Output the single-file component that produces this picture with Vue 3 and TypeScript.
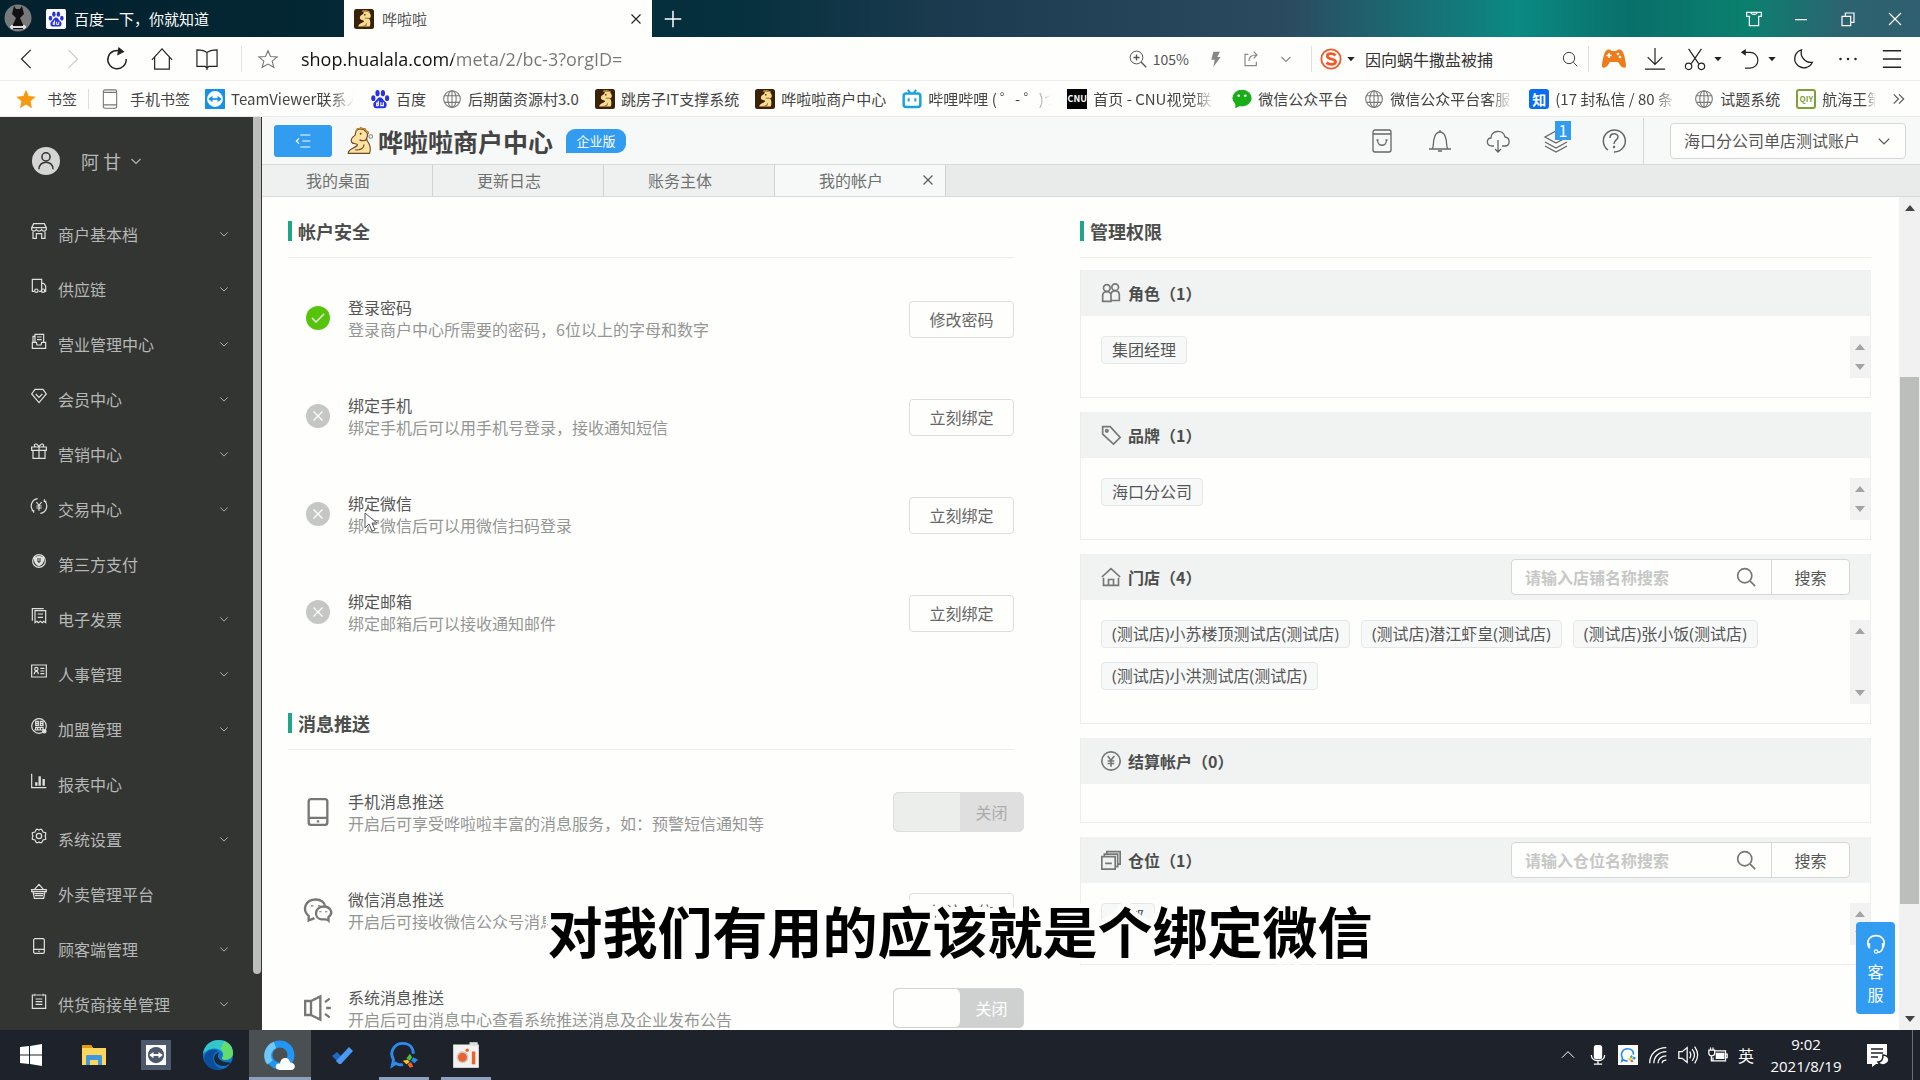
<script setup lang="ts">
import { ref } from 'vue'

interface Bookmark { icon: string; label: string; cut?: boolean }
interface MenuItem { icon: string; label: string; open: boolean }
interface Setting { icon: string; title: string; desc: string; action?: string; disabled?: boolean }
interface Panel { icon: string; title: string; count: number; tags: string[]; search?: string; tall?: boolean; empty?: boolean }

const dino = '<rect width="24" height="24" rx="3" fill="#3a2208" stroke="none"/><path d="M5 21c1-4 5-4 7-6 1-2-4-1-5-4 0-3 2-4 4-5l1-3 3 0 3 1 2 3 0 3-2 1c2 3 2 6 1 10z" fill="#f8dc93" stroke="none"/><circle cx="13" cy="7" r="1" fill="#3a2208" stroke="none"/><path d="M9 21c4 0 6-1 6-4M18 11h-5" stroke="#a4702a"/><path d="m10 3 1-1 1 1 1-1 2 0 2 1 2 1" stroke="#e0a040"/>'
const paw = '<g fill="#2932e1" stroke="none"><ellipse cx="4" cy="11" rx="2.500" ry="3.500"/><ellipse cx="9" cy="5" rx="2.500" ry="3.700"/><ellipse cx="15.500" cy="5" rx="2.500" ry="3.700"/><ellipse cx="20.500" cy="11" rx="2.500" ry="3.500"/><path d="M12 10c3 0 4 4 7 6 2 2 1 7-2 7H7c-3 0-4-5-2-7 3-2 4-6 7-6z"/></g><path d="M10 14v6M10 17h-2v3h2M13 16v4h3v-4" stroke="#fff" stroke-width="1.400" fill="none"/>'
const wecom = '<path d="M11 20c-2 1-5 0-6-1l-3 2 1-5C-1 9 4 2 11 2c6 0 9 4 9 9" stroke="#2b8cf0" stroke-width="2.500" fill="none"/><g stroke="none"><path d="m17 11 2 3-2 3-3-2z" fill="#48c03a"/><path d="m20 14 4 2-3 3-3-2z" fill="#2b8cf0"/><path d="m18 18 2 4-3 1-2-3z" fill="#f3602c"/><path d="m11 17 4-1 2 2-3 2z" fill="#fbc02d"/></g>'

const icons: Record<string, string> = {
  baidu: '<rect width="24" height="24" rx="2" fill="#fff" stroke="none"/><g transform="translate(2 2) scale(.83)">' + paw + '</g>',
  paw, dino, wecom,
  back: '<path d="m16 2-10 10 10 10"/>',
  forward: '<path d="m8 2 10 10-10 10"/>',
  reload: '<path d="M17 4A10 10 0 1 0 22 12" stroke-width="1.600"/><path d="m14 0 5 4-6 3z" fill="currentColor"/>',
  home: '<path d="M1 13 12 1l11 12M4 10v13h16V10"/>',
  book: '<path d="M12 4v20M12 5c-2-2-5-3-11-3v18h9l2 2 2-2h9V2c-6 0-9 1-11 3z"/>',
  starLine: '<path d="m12 2 3 7 8 .6-6 5 2 7.400-7-4-7 4 2-7.400-6-5L9 9z"/>',
  star: '<path d="m12 1 3.300 7.500 8.200.8-6 5.500 1.700 8.200-7.200-4.300L4.800 23l1.700-8.200-6-5.500 8.200-.8z" fill="#f7980f" stroke="none"/>',
  zoomIn: '<circle cx="10" cy="10" r="8.500"/><path d="M10 6v8M6 10h8M16 16l7 7" stroke-width="1.800"/>',
  bolt: '<path d="M8 1h10l-4 8h5L8 24l2-11H5z" fill="#858885" stroke="none"/>',
  share: '<path d="M8 5H3v17h17v-6M9 15c0-6 3-9 11-9M16 1l5 5-5 5" stroke-width="1.800"/>',
  chev: '<path d="m3 8 9 9 9-9"/>',
  sogou: '<circle cx="12" cy="12" r="10.500" stroke="#ef5a28" stroke-width="2"/><path d="M17 8c-3-2.500-9-2.500-9 1 0 4 9 2 9 6 0 3.500-7 3.500-10 1" stroke="#ef5a28" stroke-width="3"/>',
  caret: '<path d="M1 6h22L12 19z" fill="currentColor" stroke="none"/>',
  search: '<circle cx="10.500" cy="10.500" r="8.500"/><path d="m17 17 6 6"/>',
  pad: '<path d="M5 3c2-1 4 0 5 1h4c1-1 3-2 5-1 3 1 5 12 5 16 0 3-4 2-6-1l-2-3H8l-2 3c-2 3-6 4-6 1C0 15 2 4 5 3z" fill="#ee7c1c" stroke="none"/><path d="M7 6v5M4.500 8.500h5" stroke="#fff" stroke-width="1.600"/><circle cx="16" cy="7" r="1.300" fill="#fff" stroke="none"/><circle cx="18" cy="10" r="1.300" fill="#fff" stroke="none"/>',
  download: '<path d="M12 0v18M4 10l8 8 8-8M1 23h22"/>',
  cut: '<path d="m5 1 11 16M19 1 8 17"/><circle cx="5" cy="20" r="3.500"/><circle cx="19" cy="20" r="3.500"/>',
  undo: '<path d="M3 4h9a9 9 0 0 1 0 19H6" stroke-width="1.400"/><path d="M7 0v8L1 4z" fill="currentColor" stroke="none"/>',
  moon: '<path d="M9 1a11 11 0 1 0 13 15A12 12 0 0 1 9 1z" stroke-width="1.600"/>',
  dots: '<g fill="currentColor" stroke="none"><circle cx="3" cy="12" r="1.500"/><circle cx="12" cy="12" r="1.500"/><circle cx="21" cy="12" r="1.500"/></g>',
  menu: '<path d="M1 2h22M1 12h22M1 22h22" stroke-width="1.800"/>',
  shirt: '<path d="M1 2h6c1 4 9 4 10 0h6v6h-4v14H5V8H1zM7 2h10"/>',
  min: '<path d="M3 13h18"/>',
  restore: '<path d="M3 8h13v14H3zM8 8V3h13v14h-5"/>',
  close: '<path d="m3 3 18 18M21 3 3 21"/>',
  plus: '<path d="M12 1v22M1 12h22"/>',
  more: '<path d="m3 4 8 8-8 8M12 4l8 8-8 8" stroke-width="2"/>',
  phoneLine: '<rect x="4" y="1" width="16" height="22" rx="2"/><path d="M4 19h16M4 4h16" />',
  tv: '<rect width="24" height="24" rx="1" fill="#1592e6" stroke="none"/><circle cx="12" cy="12" r="9.500" fill="#fff" stroke="none"/><path d="M6 12h12" stroke="#1592e6" stroke-width="2"/><path d="M9 8v8l-5-4zM15 8v8l5-4z" fill="#1592e6" stroke="none"/>',
  globe: '<circle cx="12" cy="12" r="10"/><ellipse cx="12" cy="12" rx="5" ry="10"/><path d="M12 2v20M3 8h18M3 16h18"/>',
  bili: '<path d="m7 1 3 4M17 1l-3 4" stroke="#19a3d9" stroke-width="2.400"/><rect x="2" y="5.500" width="20" height="16" rx="3" stroke="#19a3d9" stroke-width="3"/><path d="M8 11v4M16 11v4" stroke="#19a3d9" stroke-width="2.400"/>',
  wechatFill: '<ellipse cx="12" cy="11" rx="11.500" ry="10" fill="#1aad19" stroke="none"/><path d="m4 16 0 7 6-3z" fill="#1aad19" stroke="none"/><circle cx="8" cy="8" r="1.500" fill="#fff" stroke="none"/><circle cx="16" cy="8" r="1.500" fill="#fff" stroke="none"/>',
  fold: '<path d="M8 3h15M11 12h12M8 21h15M6 8l-4 4 4 4" stroke-width="1.700"/>',
  bag: '<rect x="3" y="1" width="18" height="22" rx="2"/><path d="M3 5h18M7.500 11c0 7 9 7 9 0M6.500 11h2M15.500 11h2"/>',
  bell: '<path d="M4 20c2-2 1-6 2-10 1-5 3-7 6-7s5 2 6 7c1 4 0 8 2 10zM1 20h22M10 22h4M12 1v2" />',
  cloud: '<path d="M8 17H6C0 17 0 9 5 9c0-8 12-9 14-1 6 1 5 9 0 9h-3M12 11v12M9 20l3 3 3-3"/>',
  layers: '<path d="m12 2 11 6-11 6L1 8zM1 13l11 6 11-6M1 17l11 6 11-6"/>',
  help: '<path d="M6 21A11 11 0 1 1 12 23M8 9c0-6 8-5 8-1 0 3-4 3-4 7" stroke-width="1.500"/><circle cx="12" cy="18" r="1.200" fill="currentColor" stroke="none"/>',
  user: '<circle cx="12" cy="12" r="12" fill="#d4d5d4" stroke="none"/><circle cx="12" cy="8.500" r="3.500" stroke="#333532"/><path d="M6 19c0-8 12-8 12 0" stroke="#333532"/>',
  shop: '<path d="M4 1h16l3 6v3c-2 3-5 3-7 0-2 3-6 3-8 0-2 3-5 3-7 0V7zM1 7h22M3 13v10h5v-7h8v7h5V13"/>',
  truck: '<path d="M5 20H2V2h14v18h-4M16 8h3l3 4v8h-1"/><circle cx="8" cy="19" r="2.500"/><circle cx="18" cy="19" r="2.500"/>',
  desk: '<path d="M6 14V2h13v12M9 6h7M9 10h7M2 14h6l1 4h6l1-4h6v9H2zM6 5H3v9"/>',
  gem: '<path d="M6 2h12l5 7-11 13L1 9zM7 9l5 5 5-5"/>',
  gift: '<path d="M1 6h22v5H1zM3 11v12h18V11M12 6v17M12 6C8-3 2 4 7 6M12 6c4-9 10-2 5 0"/>',
  trade: '<path d="M10 1A11 11 0 0 0 3 19M1 19h3v3M14 23A11 11 0 0 0 21 5M23 5h-3V2M8 6l4 5 4-5M12 11v8M8 12h8M8 15h8"/>',
  shield: '<circle cx="12" cy="12" r="9.500"/><path d="m12 5 7 2c0 6-2 10-7 12-5-2-7-6-7-12z" fill="currentColor"/><path d="M9 9h6M9 12h6M12 12v3" stroke="#333532"/>',
  bill: '<path d="M6 4h16v18l-3-2-2 2-3-2-3 2-2-2-3 2zM2 19V1h17M10 9h8M10 14h8"/>',
  card: '<path d="M1 3h22v18H1zM14 8h6M14 12h6M14 16h6M5 17c0-6 6-6 6 0"/><circle cx="8" cy="9" r="2.500"/>',
  ally: '<circle cx="12" cy="12" r="11"/><path d="M7 5h4v6H7zM14 5h4v6h-4zM7 8h4M14 8h4M7 14h11v4H7zM10 14v4M14 14v4M5 18h15"/><circle cx="20" cy="20" r="2.500" fill="currentColor"/>',
  chart: '<path d="M1 1v21h22" /><path d="M8 19v-5M13 19V5M19 19V9" stroke-width="3.500"/>',
  gear: '<path d="M8 2h2l2 1 2-1h2l2 4 4 1v4l-1 1 1 2v3l-4 1-2 4h-3l-1-1-2 1H8l-2-4-4-1v-3l1-2-1-2V7l4-1z"/><circle cx="12" cy="12" r="4"/>',
  basket: '<path d="m5 10 7-8 7 8M1 10h22v3H1zM3 13l2 10h14l2-10M5 16h14M6 19h12" />',
  phone: '<rect x="4" y="1" width="16" height="22" rx="2"/><path d="M4 17h16M11 20h2"/>',
  note: '<path d="M5 3H2v20h20V3h-3M8 3h8M6 1v4M18 1v4M7 9h10M7 13h10M7 17h10"/>',
  okDot: '<circle cx="12" cy="12" r="12" fill="#55c40a" stroke="none"/><path d="m6 12 4 4 8-8" stroke="#fff"/>',
  noDot: '<circle cx="12" cy="12" r="12" fill="#c5c7c5" stroke="none"/><path d="m7.500 7.500 9 9m0-9-9 9" stroke="#fff"/>',
  wechat: '<path d="M9 19c-2 1-3 1-5 2v-4C-2 12 1 3 10 3c5 0 8 3 8 6M18 20c1 0 2 0 3 1v-3c5-4 1-9-4-9-8 0-9 10-2 11z"/><path d="M7 8v1M13 8v1M14 13v1M19 13v1"/>',
  horn: '<path d="M1 6h5v12H1zM6 6l8-4v20l-8-4M18 7l4-3M19 12h4M18 17l4 3"/>',
  roles: '<circle cx="7" cy="6" r="4"/><circle cx="17" cy="5" r="4"/><path d="M2 22v-7c0-6 10-6 10 0v7zM12 13c1-5 10-5 10 1v7H12"/>',
  tag: '<path d="M2 2h9l12 13-8 8L2 11z"/><circle cx="7" cy="7" r="1.500"/>',
  house: '<path d="m1 12 11-10 11 10M3 13v9h18v-9M9 22v-7h6v7"/>',
  yen: '<circle cx="12" cy="12" r="11"/><path d="m8 6 4 5 4-5M12 11v8M8 12h8M8 15h8"/>',
  stack: '<path d="M1 8h16v15H1zM4 8V5h16v15h-3M7 5V2h16v15h-3M5 16h8"/>',
  headset: '<path d="M4 17C-1 8 5 2 12 2s13 6 8 15M4 11v6M20 11v6c-1 4-3 5-6 5" stroke-width="2"/><circle cx="12" cy="21" r="2"/>',
  win: '<path d="M1 4l9-1v8.500H1zM11 3l12-2v10.500H11zM1 12.500h9V21l-9-1zM11 12.500h12V23l-12-2z" fill="#fff" stroke="none"/>',
  folder: '<path d="M0 2h9l2 3h13v17H0z" fill="#ffd65c" stroke="none"/><path d="M0 2h9l2 3H0z" fill="#e09a10" stroke="none"/><path d="M4 22v-8c0-2 1-2 2-2h12c1 0 2 0 2 2v8h-4v-5H8v5z" fill="#3f97dd" stroke="none"/>',
  tvTask: '<rect width="24" height="24" fill="#4c5a6b" stroke="none"/><rect x="4" y="4" width="16" height="16" fill="#fff" stroke="none"/><circle cx="12" cy="12" r="6.500" fill="#4c5a6b" stroke="none"/><path d="M8 12h8" stroke="#fff" stroke-width="1.500"/><path d="M10 9.500v5L6.500 12zM14 9.500v5l3.500-2.500z" fill="#fff" stroke="none"/>',
  edge: '<circle cx="12" cy="12" r="12" fill="#1173cc" stroke="none"/><path d="M0 11C2-4 24-3 24 10c0 5-5 7-9 5 5-6-7-13-15-4z" fill="#35c6c8" stroke="none"/><path d="M17 1c5 2 7 6 7 10-1 5-6 6-9 4 2-4 1-7-1-8z" fill="#62dd6c" stroke="none"/><path d="M12 9c-6 1-5 13 4 14-9 3-15-3-15-9 1-5 6-8 11-5z" fill="#0b4f9c" stroke="none"/><path d="M13 10c-3 3 0 8 8 8l1 0c-3 5-14 3-13-4 0-2 2-4 4-4z" fill="#1b2733" stroke="none"/>',
  qq: '<circle cx="12" cy="12" r="8.800" stroke="#2196f3" stroke-width="5.500"/><path d="M4 18A9 9 0 0 1 8 4" stroke="#6fc8fa" stroke-width="5.500"/><path d="M12 24c-5 0-4-6 0-5 1-7 8-5 8-1 5 0 5 6 1 6z" fill="#fff" stroke="none"/>',
  todo: '<path d="m2 13 5-4 4 4-1 8z" fill="#2564c0" stroke="none"/><path d="m9 21-3-3L19 4l4 4L11 21z" fill="#4a9af5" stroke="none"/>',
  cam: '<rect x="1" y="3" width="22" height="20" fill="#f3f2f0" stroke="none"/><path d="M15 1h7v3h-7z" fill="#ddd" stroke="none"/><circle cx="9" cy="14" r="4.500" fill="#e8642c" stroke="#ccc"/><circle cx="13" cy="8" r="1.500" fill="#e8642c" stroke="none"/><path d="M17 9h3v11h-3z" fill="#e8642c" stroke="none"/>',
  up: '<path d="m3 16 9-9 9 9"/>',
  mic: '<rect x="7" y="0" width="10" height="17" rx="3" fill="#fff" stroke="none"/><path d="M4 12c0 9 16 9 16 0M12 19v4M7 23h10"/>',
  wecomTray: '<rect width="24" height="24" fill="#fff" stroke="none"/><g transform="translate(3 3) scale(.78)">' + wecom + '</g>',
  wifi: '<path d="M2 22C2 11 10 3 22 3M7 22c0-8 6-14 15-14M12 22c0-5 4-9 10-9M17 22c0-3 2-4 5-4"/>',
  sound: '<path d="M1 8h4l6-5v18l-6-5H1zM14 8c2 3 2 5 0 8M17 5c4 5 4 9 0 14M20 2c5 7 5 13 0 20"/>',
  battery: '<path d="M8 7h13v12H6v-4M21 11h2v4h-2M1 6h7v4c0 4-7 4-7 0zM3 6V3M6 6V3M4 13v6h2"/><path d="M10 10h9v6h-9z" fill="#fff"/>',
  notice: '<path d="M1 1h20v13l-4 7h-7l-4 3v-3H1z" fill="#fff" stroke="none"/><path d="M5 6h12M5 10h12M5 14h7" stroke="#1e232b" stroke-width="1.600"/><path d="M17 12c0 7-4 7-5 7 3 5 10 3 11-2 0-3-3-5-6-5z" fill="#fff" stroke="#1e232b"/>',
  logo: '<path d="M2 23c0-4 5-4 8-7 1-2-4-1-5-3s0-4 3-6l1-4 3-2 4 1 3 3 0 3-1 2 1 2c3 4 3 8 2 11z" fill="#ffe2a0" stroke="#6a4a22"/><path d="m9 3 1-2 2 0 1-1 2 1 2 0 1 2 2 1 0 2" stroke="#c08030"/><path d="M8 20c5 0 8-1 8-5M19 10c-2 2-5 2-7 1" stroke="#6a4a22"/><circle cx="13" cy="5.500" r=".8" fill="#333" stroke="none"/><circle cx="22" cy="8" r="1.600" fill="#fff" stroke="#888"/>',
}

const navTools = ['back', 'forward', 'reload', 'home', 'book']
const bookmarks: Bookmark[] = [
  { icon: 'tv', label: 'TeamViewer联系人', cut: true },
  { icon: 'paw', label: '百度' },
  { icon: 'globe', label: '后期菌资源村3.0' },
  { icon: 'dino', label: '跳房子IT支撑系统' },
  { icon: 'dino', label: '哗啦啦商户中心' },
  { icon: 'bili', label: '哔哩哔哩 ( ゜- ゜)つ', cut: true },
  { icon: 'cnu', label: '首页 - CNU视觉联', cut: true },
  { icon: 'wechatFill', label: '微信公众平台' },
  { icon: 'globe', label: '微信公众平台客服', cut: true },
  { icon: 'zhi', label: '(17 封私信 / 80 条', cut: true },
  { icon: 'globe', label: '试题系统' },
  { icon: 'iqy', label: '航海王第', cut: true },
]
const letterIcons: Record<string, string> = { cnu: 'CNU', zhi: '知', iqy: 'QIY' }

const menu: MenuItem[] = [
  { icon: 'shop', label: '商户基本档', open: true },
  { icon: 'truck', label: '供应链', open: true },
  { icon: 'desk', label: '营业管理中心', open: true },
  { icon: 'gem', label: '会员中心', open: true },
  { icon: 'gift', label: '营销中心', open: true },
  { icon: 'trade', label: '交易中心', open: true },
  { icon: 'shield', label: '第三方支付', open: false },
  { icon: 'bill', label: '电子发票', open: true },
  { icon: 'card', label: '人事管理', open: true },
  { icon: 'ally', label: '加盟管理', open: true },
  { icon: 'chart', label: '报表中心', open: false },
  { icon: 'gear', label: '系统设置', open: true },
  { icon: 'basket', label: '外卖管理平台', open: false },
  { icon: 'phone', label: '顾客端管理', open: true },
  { icon: 'note', label: '供货商接单管理', open: true },
]
const pageTabs = ['我的桌面', '更新日志', '账务主体', '我的帐户']
const activeTab = ref('我的帐户')

const security: Setting[] = [
  { icon: 'okDot', title: '登录密码', desc: '登录商户中心所需要的密码，6位以上的字母和数字', action: '修改密码' },
  { icon: 'noDot', title: '绑定手机', desc: '绑定手机后可以用手机号登录，接收通知短信', action: '立刻绑定' },
  { icon: 'noDot', title: '绑定微信', desc: '绑定微信后可以用微信扫码登录', action: '立刻绑定' },
  { icon: 'noDot', title: '绑定邮箱', desc: '绑定邮箱后可以接收通知邮件', action: '立刻绑定' },
]
const pushes: Setting[] = [
  { icon: 'phone', title: '手机消息推送', desc: '开启后可享受哗啦啦丰富的消息服务，如：预警短信通知等', disabled: true },
  { icon: 'wechat', title: '微信消息推送', desc: '开启后可接收微信公众号消息', action: '关注微信' },
  { icon: 'horn', title: '系统消息推送', desc: '开启后可由消息中心查看系统推送消息及企业发布公告' },
]
const panels: Panel[] = [
  { icon: 'roles', title: '角色', count: 1, tags: ['集团经理'] },
  { icon: 'tag', title: '品牌', count: 1, tags: ['海口分公司'] },
  { icon: 'house', title: '门店', count: 4, tall: true, search: '请输入店铺名称搜索', tags: ['(测试店)小苏楼顶测试店(测试店)', '(测试店)潜江虾皇(测试店)', '(测试店)张小饭(测试店)', '(测试店)小洪测试店(测试店)'] },
  { icon: 'yen', title: '结算帐户', count: 0, tags: [], empty: true },
  { icon: 'stack', title: '仓位', count: 1, search: '请输入仓位名称搜索', tags: ['全部'] },
]
const tasks = [
  { icon: 'win', state: '' }, { icon: 'folder', state: '' }, { icon: 'tvTask', state: 'wide' }, { icon: 'edge', state: 'wide' },
  { icon: 'qq', state: 'wide current' }, { icon: 'todo', state: '' }, { icon: 'wecom', state: 'running' }, { icon: 'cam', state: 'running' },
]
const tray = ['up', 'mic', 'wecomTray', 'wifi', 'sound', 'battery']
const url = ref('shop.hualala.com/meta/2/bc-3?orgID=')
const query = ref('因向蜗牛撒盐被捕')
</script>

<template>
  <div class="desktop">
    <header class="tabstrip">
      <svg class="avatar" viewBox="0 0 28 28"><circle cx="14" cy="14" r="13.500" fill="#77797b" /><path d="M10 2l2 3h4l2-3 2 8-4 4 5 11H7l5-11-4-4z" fill="#111" /><path d="M6 23h16M8 21v4M20 21v4" stroke="#ddd" stroke-width="2" /></svg>
      <button class="win-tab first"><svg class="ico s20" viewBox="0 0 24 24" v-html="icons.baidu" />百度一下，你就知道</button>
      <button class="win-tab active"><svg class="ico s20" viewBox="0 0 24 24" v-html="icons.dino" /><span>哗啦啦</span><svg class="ico s12 end" viewBox="0 0 24 24" v-html="icons.close" /></button>
      <button class="bare plus" aria-label="新建标签页"><svg class="ico s18" viewBox="0 0 24 24" v-html="icons.plus" /></button>
      <div class="win-ctl">
        <button v-for="n in ['shirt', 'min', 'restore', 'close']" :key="n" class="bare" :aria-label="n"><svg class="ico s16" viewBox="0 0 24 24" v-html="icons[n]" /></button>
      </div>
    </header>

    <div class="toolbar">
      <button v-for="n in navTools" :key="n" class="bare tool" :class="n" :aria-label="n"><svg class="ico s22" viewBox="0 0 24 24" v-html="icons[n]" /></button>
      <i class="vline"></i>
      <svg class="ico s20 fav" viewBox="0 0 24 24" v-html="icons.starLine" />
      <input v-model="url" class="url" aria-label="地址" />
      <button class="bare zoomlv"><svg class="ico s18" viewBox="0 0 24 24" v-html="icons.zoomIn" />105%</button>
      <button v-for="n in ['bolt', 'share', 'chev']" :key="n" class="bare mini" :aria-label="n"><svg class="ico" :class="n === 'chev' ? 's12' : 's16'" viewBox="0 0 24 24" v-html="icons[n]" /></button>
      <div class="websearch">
        <svg class="ico s22" viewBox="0 0 24 24" v-html="icons.sogou" /><svg class="ico s8" viewBox="0 0 24 24" v-html="icons.caret" />
        <input v-model="query" aria-label="网页搜索" />
        <svg class="ico s16" viewBox="0 0 24 24" v-html="icons.search" />
      </div>
      <div class="extras">
        <button class="bare" aria-label="游戏"><svg class="ico s24" viewBox="0 0 24 24" v-html="icons.pad" /></button>
        <button class="bare" aria-label="下载"><svg class="ico s22" viewBox="0 0 24 24" v-html="icons.download" /></button>
        <button class="bare" aria-label="截图"><svg class="ico s22" viewBox="0 0 24 24" v-html="icons.cut" /><svg class="ico s8" viewBox="0 0 24 24" v-html="icons.caret" /></button>
        <button class="bare" aria-label="恢复"><svg class="ico s20" viewBox="0 0 24 24" v-html="icons.undo" /><svg class="ico s8" viewBox="0 0 24 24" v-html="icons.caret" /></button>
        <div class="end-tools">
          <button class="bare" aria-label="夜间"><svg class="ico s20" viewBox="0 0 24 24" v-html="icons.moon" /></button>
          <button class="bare" aria-label="更多"><svg class="ico s20" viewBox="0 0 24 24" v-html="icons.dots" /></button>
          <button class="bare" aria-label="菜单"><svg class="ico s20" viewBox="0 0 24 24" v-html="icons.menu" /></button>
        </div>
      </div>
    </div>

    <nav class="bookmarks">
      <a href="#" class="bm-root"><svg class="ico s20" viewBox="0 0 24 24" v-html="icons.star" />书签</a>
      <a href="#" class="bm-phone"><svg class="ico s20" viewBox="0 0 24 24" v-html="icons.phoneLine" />手机书签</a>
      <a v-for="(b, i) in bookmarks" :key="i" href="#" class="bm">
        <span v-if="letterIcons[b.icon]" class="letters" :class="b.icon">{{ letterIcons[b.icon] }}</span>
        <svg v-else class="ico s20" :class="{ line: b.icon === 'globe' }" viewBox="0 0 24 24" v-html="icons[b.icon]" />
        <span class="lbl" :class="{ cut: b.cut, short: b.icon === 'iqy' }">{{ b.label }}</span>
      </a>
      <svg class="ico s14 bm-more" viewBox="0 0 24 24" v-html="icons.more" />
    </nav>

    <div class="workspace">
      <aside class="side">
        <div class="side-in">
          <button class="bare who"><svg class="ico s28" viewBox="0 0 24 24" v-html="icons.user" /><span>阿 甘</span><svg class="ico s12" viewBox="0 0 24 24" v-html="icons.chev" /></button>
          <a v-for="m in menu" :key="m.label" href="#" class="item">
            <svg class="ico s16" viewBox="0 0 24 24" v-html="icons[m.icon]" /><span>{{ m.label }}</span>
            <svg v-if="m.open" class="ico s10 arrow" viewBox="0 0 24 24" v-html="icons.chev" />
          </a>
        </div>
        <i class="side-bar"></i>
      </aside>

      <section class="app">
        <header class="app-head">
          <button class="fold" aria-label="收起菜单"><svg class="ico s16" viewBox="0 0 24 24" v-html="icons.fold" /></button>
          <svg class="ico logo" viewBox="0 0 24 24" v-html="icons.logo" />
          <h1>哗啦啦商户中心</h1>
          <span class="edition">企业版</span>
          <div class="head-icons">
            <button class="bare" aria-label="商城"><svg class="ico s24" viewBox="0 0 24 24" v-html="icons.bag" /></button>
            <button class="bare" aria-label="通知"><svg class="ico s24" viewBox="0 0 24 24" v-html="icons.bell" /></button>
            <button class="bare" aria-label="下载"><svg class="ico s24" viewBox="0 0 24 24" v-html="icons.cloud" /></button>
            <button class="bare has-badge" aria-label="任务"><svg class="ico s24" viewBox="0 0 24 24" v-html="icons.layers" /><b>1</b></button>
            <button class="bare" aria-label="帮助"><svg class="ico s24" viewBox="0 0 24 24" v-html="icons.help" /></button>
          </div>
          <div class="account">
            <select aria-label="账户"><option>海口分公司单店测试账户</option></select>
            <svg class="ico s14" viewBox="0 0 24 24" v-html="icons.chev" />
          </div>
        </header>
        <nav class="page-tabs">
          <button v-for="t in pageTabs" :key="t" :class="{ on: t === activeTab }" @click="activeTab = t"><span>{{ t }}</span><svg v-if="t === activeTab" class="ico s12" viewBox="0 0 24 24" v-html="icons.close" /></button>
        </nav>

        <div class="view">
          <main class="cols">
            <div>
              <h2>帐户安全</h2>
              <div class="rows">
                <div v-for="s in security" :key="s.title" class="row">
                  <span class="lead"><svg class="ico s24" viewBox="0 0 24 24" v-html="icons[s.icon]" /></span>
                  <div class="txt"><strong>{{ s.title }}</strong><p>{{ s.desc }}</p></div>
                  <button class="act">{{ s.action }}</button>
                </div>
              </div>
              <h2 class="second">消息推送</h2>
              <div class="rows">
                <div v-for="s in pushes" :key="s.title" class="row">
                  <span class="lead"><svg class="ico s28 bold" viewBox="0 0 24 24" v-html="icons[s.icon]" /></span>
                  <div class="txt"><strong>{{ s.title }}</strong><p>{{ s.desc }}</p></div>
                  <button v-if="s.action" class="act">{{ s.action }}</button>
                  <label v-else class="switch" :class="{ off: s.disabled }"><input type="checkbox" :disabled="s.disabled" :aria-label="s.title" /><span>关闭</span></label>
                </div>
              </div>
            </div>
            <div>
              <h2>管理权限</h2>
              <div class="panels">
                <section v-for="p in panels" :key="p.title" class="panel">
                  <header>
                    <svg class="ico s20 bold" viewBox="0 0 24 24" v-html="icons[p.icon]" />
                    <h3>{{ p.title }}（{{ p.count }}）</h3>
                    <form v-if="p.search" @submit.prevent>
                      <input :placeholder="p.search" :aria-label="p.title" />
                      <svg class="ico s20 bold" viewBox="0 0 24 24" v-html="icons.search" />
                      <button>搜索</button>
                    </form>
                  </header>
                  <div class="body" :class="{ tall: p.tall, empty: p.empty }">
                    <div class="tags"><span v-for="t in p.tags" :key="t">{{ t }}</span></div>
                    <div v-if="!p.empty" class="spin"><i class="tri up"></i><i class="tri"></i></div>
                  </div>
                </section>
              </div>
            </div>
          </main>
          <div class="scroll"><i class="tri up"></i><span class="gap-a"></span><span class="thumb"></span><span class="gap-b"></span><i class="tri"></i></div>
          <button class="service"><svg class="ico s20" viewBox="0 0 24 24" v-html="icons.headset" /><span>客</span><span>服</span></button>
        </div>
      </section>
    </div>

    <footer class="taskbar">
      <button v-for="t in tasks" :key="t.icon" class="bare task" :class="t.state" :aria-label="t.icon"><svg class="ico" viewBox="0 0 24 24" v-html="icons[t.icon]" /></button>
      <div class="tray">
        <svg v-for="t in tray" :key="t" class="ico" :class="t" viewBox="0 0 24 24" v-html="icons[t]" />
        <span class="ime">英</span>
        <div class="clock"><time>9:02</time><time>2021/8/19</time></div>
        <svg class="ico s22" viewBox="0 0 24 24" v-html="icons.notice" />
        <i class="peek"></i>
      </div>
    </footer>

    <p class="caption">对我们有用的应该就是个绑定微信</p>
    <svg class="pointer" viewBox="0 0 14 20"><path d="M1 1v15l4-4 3 7 3-1-3-7h5z" fill="#fff" stroke="#555" /></svg>
  </div>
</template>

<style>
body { margin: 0; overflow: hidden; }
</style>

<style scoped>
* { box-sizing: border-box; }
.desktop { position: relative; display: flex; flex-direction: column; height: 100vh; overflow: hidden; background: #fefefd; color: #555; font: 16px/22px "Noto Sans CJK SC", sans-serif; }
button, input, select { font: inherit; color: inherit; }
a { color: inherit; text-decoration: none; }
h1, h2, h3, p { margin: 0; }
.bare { display: inline-flex; align-items: center; justify-content: center; border: 0; padding: 0; background: none; }
.ico { flex: none; display: block; fill: none; stroke: currentColor; stroke-width: 1.3; overflow: visible; }
.bold { stroke-width: 2; color: #777; }
.s8 { width: 8px; height: 8px; } .s10 { width: 10px; height: 10px; } .s12 { width: 12px; height: 12px; } .s14 { width: 14px; height: 14px; }
.s16 { width: 16px; height: 16px; } .s18 { width: 18px; height: 18px; } .s20 { width: 20px; height: 20px; } .s22 { width: 22px; height: 22px; }
.s24 { width: 24px; height: 24px; } .s28 { width: 28px; height: 28px; }
.s10, .s12, .s14 { stroke-width: 2.2; }

.tabstrip { flex: none; display: flex; height: 37px; align-items: stretch; color: #fff; background: linear-gradient(90deg, #03202d 0, #05303d 38%, #1d3b50 50%, #2b4a60 67%, #0b8983 79%, #0a6f69 85%, #0b806f 91%, #2d6370 96%, #2f5f70 100%); }
.avatar { width: 28px; height: 28px; margin: 4px 14px 0 4px; }
.win-tab { display: flex; align-items: center; gap: 8px; border: 0; padding: 0 10px; background: none; font-size: 15px; color: #fff; }
.win-tab.first { width: 298px; padding-left: 0; }
.win-tab.active { width: 308px; background: #fefefd; color: #555; }
.win-tab .end { margin-left: auto; color: #222; }
.plus { width: 42px; }
.plus .ico { stroke-width: 2; }
.win-ctl { margin-left: auto; display: flex; padding-right: 2px; }
.win-ctl .bare { width: 47px; }
.win-ctl .ico { stroke-width: 1.8; }

.toolbar { flex: none; display: flex; align-items: center; height: 44px; padding-left: 4px; border-bottom: 1px solid #ececec; color: #222; }
.tool { width: 45px; }
.forward { color: #ccc; }
.vline { width: 1px; height: 26px; margin: 0 16px 0 12px; background: #e2e2e2; }
.fav { color: #777; }
.url { flex: 1; min-width: 0; margin-left: 23px; padding: 0; border: 0; outline: 0; font: 18px/24px "Open Sans", sans-serif; color: transparent; background: linear-gradient(90deg, #111 152px, #777 152px) text; }
.zoomlv { gap: 6px; font-size: 14px; color: #555; margin-right: 9px; }
.mini { width: 35px; color: #888; }
.websearch { display: flex; align-items: center; margin-left: 8px; width: 278px; height: 26px; padding: 0 10px 0 8px; border: solid #ddd; border-width: 0 1px; gap: 5px; }
.websearch input { flex: 1; min-width: 0; margin-left: 5px; padding: 0; border: 0; outline: 0; color: #333; background: none; }
.extras { display: flex; align-items: center; gap: 18px; width: 331px; padding: 0 18px 0 13px; }
.extras .bare { gap: 8px; }
.end-tools { flex: 1; display: flex; justify-content: space-between; }

.bookmarks { flex: none; display: flex; align-items: center; height: 36px; padding-left: 16px; border-bottom: 1px solid #e7e9e8; font-size: 15px; color: #444; }
.bookmarks a { flex: none; display: flex; align-items: center; }
.bm-root { gap: 11px; padding-right: 11px; border-right: 1px solid #ddd; line-height: 18px; }
.bm-phone { gap: 10px; margin: 0 15px 0 11px; }
.bm-phone .ico, .line { color: #777; }
.bookmarks .bm { gap: 6px; margin-right: 16px; }
.lbl { white-space: pre; overflow: hidden; }
.cut { width: 123px; mask-image: linear-gradient(90deg, #000 80%, transparent); }
.cut.short { width: 54px; }
.letters { width: 20px; height: 20px; overflow: hidden; font-size: 9px; line-height: 20px; font-weight: 700; text-align: center; color: #fff; background: #000; display: flex; justify-content: center; }
.zhi { font-size: 14px; border-radius: 3px; background: #0a6cf5; }
.iqy { font-size: 8px; line-height: 16px; border: 2px solid #7d9f35; border-radius: 3px; background: #fff; color: #7d9f35; }
.bm-more { margin: 0 18px 0 auto; color: #555; }

.workspace { flex: 1; min-height: 0; display: flex; }
.side { flex: none; width: 262px; display: flex; overflow: hidden; background: #333532; color: #b6b8b6; }
.side-in { flex: 1; padding-top: 24px; }
.who { height: 40px; margin: 0 0 25px 32px; font-size: 18px; }
.who span { margin: 0 9px 0 21px; }
.item { display: flex; align-items: center; height: 55px; padding: 0 24px 0 31px; }
.item .s16 { margin: -6px 11px 0 0; color: #dfe0df; stroke-width: 1.8; }
.item .arrow { margin-left: auto; }
.side-bar { width: 8px; margin: 0 1px 56px 0; border-radius: 0 0 4px 4px; background: #bcbebc; }

.app { flex: 1; min-width: 0; display: flex; flex-direction: column; }
.app-head { flex: none; display: flex; align-items: center; height: 47px; padding: 1px 0 0 12px; background: #f7f9f8; }
.fold { display: grid; place-items: center; width: 58px; height: 32px; border: 0; border-radius: 3px; background: #319cf0; color: #fff; }
.logo { width: 27px; height: 28px; margin: 0 5px 0 14px; stroke-width: 1; }
h1 { font-size: 25px; line-height: 32px; color: #444; }
.edition { margin-left: 13px; width: 60px; font-size: 13px; line-height: 24px; text-align: center; color: #fff; background: #319cf0; border-radius: 9px 9px 9px 0; }
.head-icons { display: flex; align-self: stretch; margin-left: auto; border-right: 1px solid #d5d7d6; }
.head-icons .bare { width: 58px; color: #666; }
.has-badge { position: relative; }
.has-badge b { position: absolute; top: 3px; left: 28px; width: 16px; font-weight: 400; line-height: 19px; color: #fff; background: #319cf0; }
.account { display: flex; align-items: center; width: 236px; height: 36px; margin: 0 14px 0 26px; padding-right: 14px; border: 1px solid #d5d7d6; border-radius: 4px; background: #fefefd; }
.account select { flex: 1; min-width: 0; padding: 0 0 2px 13px; border: 0; appearance: none; background: none; color: #555; }
.page-tabs { flex: none; display: flex; height: 33px; border: solid #d8dad9; border-width: 1px 0; background: #e9ebea; }
.page-tabs button { display: flex; align-items: center; justify-content: space-between; width: 171px; border: 0; border-right: 1px solid #d0d2d1; padding: 0 11px 2px 44px; background: #eff1f0; color: #707270; }
.page-tabs .on { background: #f7f9f8; }
.page-tabs .ico { color: #555; }

.view { position: relative; flex: 1; min-height: 0; display: flex; }
.cols { flex: 1; display: grid; grid-template-columns: 726fr 791fr; gap: 66px; padding: 24px 28px 0 26px; overflow: hidden; }
.cols > div { min-width: 0; }
h2 { position: relative; padding: 0 0 16px 10px; border-bottom: 1px solid #eceeed; font-size: 18px; line-height: 20px; color: #4c4e4c; }
h2::before { content: ""; position: absolute; left: 0; top: 0; width: 4px; height: 20px; background: #1fa587; }
.second { margin-top: 52px; }
.rows { padding-top: 11px; }
.second + .rows { padding-top: 13px; }
.row { display: flex; align-items: center; height: 98px; padding-left: 14px; }
.lead { display: grid; place-items: center; width: 32px; margin-right: 14px; }
.txt { flex: 1; min-width: 0; white-space: nowrap; }
.txt strong { display: block; font-weight: 400; color: #555; }
.txt p { color: #949694; }
.act { width: 105px; height: 37px; margin-top: 2px; padding: 0; border: 1px solid #dcdedd; border-radius: 4px; background: #fefefd; color: #666; }
.switch { display: flex; align-items: center; width: 131px; height: 40px; margin-right: -10px; border: 1px solid #d2d4d3; border-radius: 5px; background: #cfd1d0; color: #fff; }
.switch input { appearance: none; width: 66px; height: 38px; margin: 0; border-radius: 5px; background: #fefefd; }
.switch span { flex: 1; text-align: center; }
.switch.off { background: #dedfde; border-color: #dedfde; color: #aaacaa; }
.off input { background: #eceeec; border-radius: 5px 0 0 5px; }

.panels { display: flex; flex-direction: column; gap: 14px; padding-top: 12px; }
.panel { border: solid #eceeed; border-width: 0 1px 1px; }
.panel header { display: flex; align-items: center; height: 46px; padding: 0 20px; background: #f1f3f2; }
h3 { margin-left: 7px; font-size: 16px; color: #4c4e4c; }
.panel form { display: flex; align-items: center; margin-left: auto; width: 339px; height: 36px; border: 1px solid #d5d7d6; border-radius: 4px; background: #fefefd; }
.panel input { flex: 1; min-width: 0; padding: 0 0 0 13px; border: 0; outline: 0; background: none; }
.panel input::placeholder { color: #c6c8c6; font-weight: 700; opacity: 1; }
.panel form .ico { margin-right: 15px; }
.panel form button { width: 78px; height: 100%; padding: 0; border: 0; border-left: 1px solid #d5d7d6; background: none; color: #555; }
.body { display: flex; justify-content: space-between; align-items: flex-start; height: 81px; padding: 20px 0 0 20px; }
.tall { height: 123px; }
.empty { height: 38px; }
.tags { display: flex; flex-wrap: wrap; gap: 14px 11px; }
.tags span { height: 28px; padding: 0 10px; border: 1px solid #e6e8e7; border-radius: 4px; background: #f7f9f8; font-family: "Open Sans", "Noto Sans CJK SC", sans-serif; line-height: 26px; color: #555; }
.spin { flex: none; display: flex; flex-direction: column; align-items: center; justify-content: space-between; width: 20px; height: 42px; padding: 8px 0; background: #f1f2f1; color: #a2a4a2; }
.tall .spin { height: 84px; }
.tri { width: 0; height: 0; border: solid transparent; border-width: 6px 5px 0; border-top-color: currentColor; }
.tri.up { border-width: 0 5px 6px; border-bottom-color: currentColor; }
.scroll { flex: none; display: flex; flex-direction: column; align-items: center; width: 21px; padding: 8px 0; background: #f0f1f0; color: #444; }
.gap-a { flex: 166; } .gap-b { flex: 112; }
.thumb { flex: 527; width: 19px; background: #bcbebc; }
.service { position: absolute; right: 25px; bottom: 16px; display: flex; flex-direction: column; align-items: center; width: 39px; height: 92px; padding: 12px 0 0; border: 0; border-radius: 4px; background: #319cf0; color: #fff; line-height: 23px; }
.service .ico { margin-bottom: 6px; }

.taskbar { flex: none; display: flex; height: 50px; padding-left: 1px; background: #1e232b; color: #fff; }
.task { width: 62px; border-bottom: 3px solid transparent; padding-top: 3px; }
.task:first-child { width: 60px; margin-right: 2px; }
.task .ico { width: 24px; height: 24px; }
.wide .ico { width: 30px; height: 30px; }
.task.wide.current { background: #4a4f52; border-color: #8ea0c0; }
.running { width: 50px; margin: 0 6px; border-color: #8ea0c0; }
.running .ico { width: 28px; height: 28px; }
.tray { display: flex; align-items: center; margin-left: auto; }
.tray .ico { width: 20px; height: 20px; margin-right: 10px; stroke-width: 1.5; }
.tray .up { width: 16px; margin-right: 12px; }
.ime { margin-right: 14px; }
.clock { width: 76px; margin-right: 22px; font: 15px/22px "Open Sans", sans-serif; text-align: center; white-space: nowrap; }
.clock time { display: block; }
.tray .s22 { width: 24px; height: 24px; margin-right: 22px; }
.peek { width: 1px; height: 100%; margin-right: 7px; background: #6b7078; }
.caption { position: absolute; left: 0; right: 0; bottom: 119px; text-align: center; font-size: 55px; line-height: 64px; font-weight: 700; color: #000; -webkit-text-stroke: 10px #fefefd; paint-order: stroke fill; white-space: nowrap; pointer-events: none; }
.pointer { position: absolute; left: 364px; top: 512px; width: 14px; height: 20px; }
</style>
